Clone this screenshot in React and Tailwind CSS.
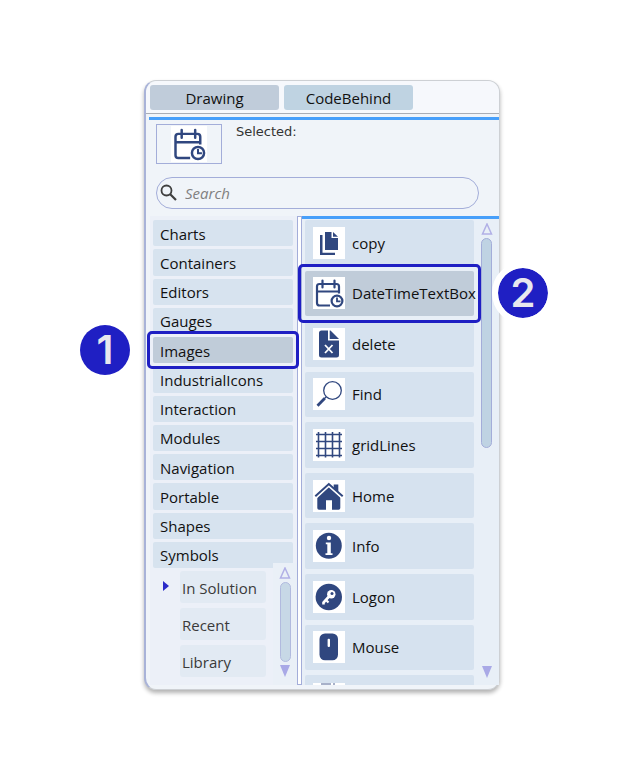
import React, { useState } from 'react';
import clsx from 'clsx';

const CATEGORIES = [
  'Charts',
  'Containers',
  'Editors',
  'Gauges',
  'Images',
  'IndustrialIcons',
  'Interaction',
  'Modules',
  'Navigation',
  'Portable',
  'Shapes',
  'Symbols',
];

const SOURCES = ['In Solution', 'Recent', 'Library'];

const CalendarClock = ({ className = 'w-8 h-8' }) => (
  <svg viewBox="0 0 32 32" className={clsx('shrink-0 bg-white', className)} fill="none" stroke="#30477f" strokeWidth="2.200">
    <path d="M17 28.500H6.500Q4 28.500 4 26V9.500Q4 7 6.500 7H23.500Q26 7 26 9.500V16.500M4 14.500H26" />
    <path d="M9.500 3.500V10.500M21.500 3.500V10.500" strokeLinecap="round" />
    <circle cx="24" cy="24" r="5.400" />
    <path d="M24 20.500V24.300H27.500" strokeWidth="1.800" />
  </svg>
);

const CopyIcon = () => (
  <svg viewBox="0 0 32 32" className="w-8 h-8 shrink-0 bg-white" fill="#30477f">
    <path d="M12 5H18.500V11H25V23H12Z" />
    <path d="M20 5L25 9.700H20Z" />
    <path d="M7 8H9.500V25.700H22V28H7Z" />
  </svg>
);

const DeleteIcon = () => (
  <svg viewBox="0 0 32 32" className="w-8 h-8 shrink-0 bg-white" fill="#30477f">
    <path d="M8.500 2.500H15V12.500H26V27Q26 29.500 23.500 29.500H8.500Q6 29.500 6 27V5Q6 2.500 8.500 2.500Z" />
    <path d="M16.700 2.500H17.500L26 11H16.700Z" />
    <path d="M12 17L19.500 25M19.500 17L12 25" stroke="#fff" strokeWidth="1.800" />
  </svg>
);

const FindIcon = () => (
  <svg viewBox="0 0 32 32" className="w-8 h-8 shrink-0 bg-white" fill="none" stroke="#30477f">
    <circle cx="19.500" cy="12.500" r="8.800" strokeWidth="1.300" />
    <path d="M13 19L11 21" strokeWidth="1.300" />
    <path d="M11.800 20.200L4.500 27.800" strokeWidth="2.800" />
  </svg>
);

const GridIcon = () => (
  <svg viewBox="0 0 32 32" className="w-8 h-8 shrink-0 bg-white" fill="none" stroke="#30477f" strokeWidth="1.600">
    <path d="M5.500 3V28.500M12.500 3V28.500M19.500 3V28.500M26.500 3V28.500" />
    <path d="M3 5.500H29M3 12.500H29M3 19.500H29M3 26.500H29" />
  </svg>
);

const HomeIcon = () => (
  <svg viewBox="0 0 32 32" className="w-8 h-8 shrink-0 bg-white" fill="#30477f">
    <path d="M20.700 4.500H25.300V14L20.700 10Z" />
    <path d="M15.800 6.500L27.300 17V28Q27.300 29.700 25.600 29.700H19V20.300H13V29.700H6Q4.300 29.700 4.300 28V17Z" />
    <path d="M2.800 17.500L15.800 5.500L29.200 17.500" fill="none" stroke="#fff" strokeWidth="2.800" />
    <path d="M2.300 16.300L15.800 4L29.700 16.300" fill="none" stroke="#30477f" strokeWidth="2" />
  </svg>
);

const InfoIcon = () => (
  <svg viewBox="0 0 32 32" className="w-8 h-8 shrink-0 bg-white" fill="#30477f">
    <circle cx="15.800" cy="15.800" r="13" />
    <circle cx="16" cy="8" r="2.200" fill="#fff" />
    <path d="M12.800 12.500H17.800V23.300H19.500V25H12.500V23.300H14.300V14.200H12.800Z" fill="#fff" />
  </svg>
);

const LogonIcon = () => (
  <svg viewBox="0 0 32 32" className="w-8 h-8 shrink-0 bg-white" fill="#30477f">
    <circle cx="15.800" cy="16" r="13.200" />
    <circle cx="18.300" cy="13.300" r="4.200" fill="#fff" />
    <path d="M16 15.500L10.500 21.500V23.500" fill="none" stroke="#fff" strokeWidth="2.600" />
    <path d="M13 19L15.500 21.500" fill="none" stroke="#fff" strokeWidth="2.200" />
    <circle cx="19" cy="12.600" r="1.500" />
  </svg>
);

const MouseIcon = () => (
  <svg viewBox="0 0 32 32" className="w-8 h-8 shrink-0 bg-white" fill="#30477f">
    <rect x="6.500" y="2.500" width="18.500" height="26.800" rx="5.500" />
    <rect x="14.600" y="7.700" width="2.400" height="8.300" rx="1" fill="#fff" />
  </svg>
);

const SYMBOLS = [
  { name: 'copy', Icon: CopyIcon },
  { name: 'DateTimeTextBox', Icon: CalendarClock },
  { name: 'delete', Icon: DeleteIcon },
  { name: 'Find', Icon: FindIcon },
  { name: 'gridLines', Icon: GridIcon },
  { name: 'Home', Icon: HomeIcon },
  { name: 'Info', Icon: InfoIcon },
  { name: 'Logon', Icon: LogonIcon },
  { name: 'Mouse', Icon: MouseIcon },
];

const ScrollBar = ({ thumbClass }) => (
  <div className="flex flex-col items-center h-full">
    <button type="button" aria-label="Scroll up">
      <svg viewBox="0 0 12 12" className="w-3 h-3 block">
        <path d="M6 1L10.500 11H1.500Z" fill="none" stroke="#b1b0e6" strokeWidth="1.500" />
      </svg>
    </button>
    <div className="flex-1 w-[11px] py-[3px]">
      <div className={clsx('rounded-full border border-[#a3add9] bg-[#bfd3e3]', thumbClass)} />
    </div>
    <button type="button" aria-label="Scroll down">
      <svg viewBox="0 0 12 12" className="w-3 h-3 block">
        <path d="M1 0H11L6 12Z" fill="#a9a9e6" />
      </svg>
    </button>
  </div>
);

const App = () => {
  const [tab, setTab] = useState('Drawing');
  const [category, setCategory] = useState('Images');
  const [symbol, setSymbol] = useState('DateTimeTextBox');
  const [search, setSearch] = useState('');

  return (
    <div className="min-h-screen bg-white pt-20 pb-20 pl-36 pr-32 font-['Open_Sans','Noto_Sans',sans-serif] text-[15px] leading-5 text-[#111]">
      <div className="rounded-xl border border-[#cdd0d4] border-l-2 border-l-[#a9b3d8] bg-[#f0f4f9] pb-1 shadow-[0_3px_4px_rgba(0,0,0,0.3)]">
        {/* Tabs */}
        <div className="flex gap-[5px] rounded-t-xl border-b border-[#a9adb5] bg-[#f6f8fc] pl-1 pt-1 pb-[3px]">
          {['Drawing', 'CodeBehind'].map((name) => (
            <button
              key={name}
              type="button"
              onClick={() => setTab(name)}
              className={clsx('w-[129px] h-[25px] rounded-[3px]', tab === name ? 'bg-[#c0ccda]' : 'bg-[#bfd3e2]')}
            >
              {name}
            </button>
          ))}
        </div>

        {/* Selection and search */}
        <div className="ml-[3px] mt-[3px] border-t-3 border-[#479ffa] pl-[7px] pr-5 pt-1">
          <div className="flex gap-[14px]">
            <div className="w-[66px] h-10 flex justify-center items-center border border-[#a3add9]">
              <CalendarClock className="w-9 h-9" />
            </div>
            <p className="font-['DejaVu_Sans',sans-serif] text-[13px] leading-4 text-[#333]">Selected:</p>
          </div>
          <div className="mt-[13px] flex h-8 items-center gap-[7px] rounded-full border border-[#a3add9] pl-[3px]">
            <svg viewBox="0 0 18 18" className="w-[18px] h-[18px] shrink-0" fill="none" stroke="#3f3f3f">
              <circle cx="6.500" cy="6.500" r="5" strokeWidth="1.800" />
              <path d="M10 10L16 16" strokeWidth="2.200" />
            </svg>
            <input
              type="text"
              aria-label="Search"
              value={search}
              onChange={(e) => setSearch(e.target.value)}
              placeholder="Search"
              className="h-full min-w-0 flex-1 bg-transparent italic outline-none placeholder:text-[#808080]"
            />
          </div>
        </div>

        <div className="mt-[7px] ml-1 flex">
          {/* Categories */}
          <div className="w-[147px] shrink-0 bg-[#ecf0f8] pt-1 pl-[3px]">
            <div className="mr-1 flex h-[348px] flex-col gap-[3px]">
              {CATEGORIES.map((name) => (
                <div key={name} className="relative flex flex-1">
                  <button
                    type="button"
                    onClick={() => setCategory(name)}
                    className={clsx(
                      'flex-1 rounded-[2px] pl-[7px] pt-px text-left',
                      category === name ? 'bg-[#c0ccd9]' : 'bg-[#d7e3ef]'
                    )}
                  >
                    {name}
                  </button>
                  {name === 'Images' && (
                    <>
                      <div className="pointer-events-none absolute -inset-[6px] z-10 rounded-[5px] border-3 border-[#1f1fc3]" />
                      <span className="absolute -left-[73px] top-1/2 flex h-[50px] w-[50px] -translate-y-1/2 items-center justify-center rounded-full bg-[#1f1fc3] font-[Inter,sans-serif] text-[40px] font-semibold text-[#e8e8ee]">
                        1
                      </span>
                    </>
                  )}
                </div>
              ))}
            </div>
            <div className="flex h-[117px] justify-between">
              <div className="flex pt-[3px] pl-[10px]">
                <svg viewBox="0 0 6 12" className="mt-[9px] h-3 w-[6px]">
                  <path d="M0 1L6 6L0 11Z" fill="#2b2bc8" />
                </svg>
                <div className="ml-[11px] flex w-[86px] flex-col gap-[5px]">
                  {SOURCES.map((name) => (
                    <button key={name} type="button" className="h-8 whitespace-nowrap rounded-[3px] bg-[#e2eaf3] pl-[2px] pt-[2px] text-left text-[#3a3a3a]">
                      {name}
                    </button>
                  ))}
                </div>
              </div>
              <div className="z-[1] -mt-[5px] w-6 bg-[#eaf0f7] pt-1 pb-2">
                <ScrollBar thumbClass="h-full opacity-80" />
              </div>
            </div>
          </div>

          {/* Splitter */}
          <div className="w-[5px] shrink-0 border border-[#a3add9] bg-white" />

          {/* Symbols */}
          <div className="flex min-w-0 flex-1 border-t-3 border-[#479ffa] bg-[#e8eff7] pl-[3px]">
            <div className="min-w-0 flex-1 pt-px">
              <div className="flex h-[450px] flex-col gap-[5px]">
                {SYMBOLS.map(({ name, Icon }) => (
                  <div key={name} className="relative flex flex-1">
                    <button
                      type="button"
                      onClick={() => setSymbol(name)}
                      className={clsx(
                        'flex min-w-0 flex-1 items-center gap-[7px] rounded-[2px] pl-2 text-left',
                        symbol === name ? 'bg-[#c0ccd9]' : 'bg-[#d6e2ef]'
                      )}
                    >
                      <Icon />
                      {name}
                    </button>
                    {name === 'DateTimeTextBox' && (
                      <>
                        <div className="pointer-events-none absolute -inset-[7px] z-10 rounded-[5px] border-3 border-[#1f1fc3]" />
                        <span className="absolute -right-[80px] top-1/2 flex h-[62px] w-[62px] -translate-y-1/2 items-center justify-center rounded-full border-6 border-white bg-[#1f1fc3] bg-clip-padding font-[Inter,sans-serif] text-[40px] font-semibold text-[#e8e8ee]">
                          2
                        </span>
                      </>
                    )}
                  </div>
                ))}
              </div>
              {/* next symbol, cut off by the bottom edge */}
              <div className="mt-[5px] h-[10px] overflow-hidden rounded-t-[2px] bg-[#d6e2ef] pl-2 pt-2">
                <svg viewBox="0 0 32 32" className="w-8 h-8 bg-white">
                  <path d="M8 1H18M20 1H22" stroke="#8c98b8" strokeWidth="1.500" />
                </svg>
              </div>
            </div>
            <div className="w-[25px] shrink-0 pt-1 pb-[7px]">
              <ScrollBar thumbClass="h-[210px]" />
            </div>
          </div>
        </div>
      </div>
    </div>
  );
};

export default App;
